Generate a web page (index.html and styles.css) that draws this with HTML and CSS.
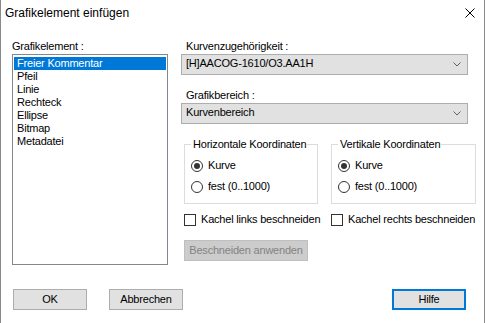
FILE: index.html
```html
<!DOCTYPE html>
<html lang="de">
<head>
    <meta charset="UTF-8">
    <meta name="viewport" content="width=device-width, initial-scale=1.0">
    <title>Grafikelement einfügen</title>
    <link rel="stylesheet" href="styles.css">
</head>
<body>

    <div class="dialog">
        <div class="titlebar">
            <span class="title">Grafikelement einfügen</span>
            <svg class="close" width="10" height="10" viewBox="0 0 10 10">
                <path d="M0.5 0.5L9.5 9.5M9.5 0.5L0.5 9.5" stroke="#000" stroke-width="1" fill="none"/>
            </svg>
        </div>

        <div class="main">
            <div class="left">
                <div class="label">Grafikelement :</div>
                <ul class="listbox">
                    <li class="selected">Freier Kommentar</li>
                    <li>Pfeil</li>
                    <li>Linie</li>
                    <li>Rechteck</li>
                    <li>Ellipse</li>
                    <li>Bitmap</li>
                    <li>Metadatei</li>
                </ul>
            </div>

            <div class="right">
                <div class="label indent">Kurvenzugehörigkeit :</div>
                <div class="combo">
                    <span>[H]AACOG-1610/O3.AA1H</span>
                    <svg width="8" height="5" viewBox="0 0 8 5"><polyline points="0.5,0.5 4,4 7.5,0.5" stroke="#606060" fill="none"/></svg>
                </div>

                <div class="label indent">Grafikbereich :</div>
                <div class="combo">
                    <span>Kurvenbereich</span>
                    <svg width="8" height="5" viewBox="0 0 8 5"><polyline points="0.5,0.5 4,4 7.5,0.5" stroke="#606060" fill="none"/></svg>
                </div>

                <div class="options">
                    <div class="groups">
                        <fieldset class="group group-h">
                            <legend>Horizontale Koordinaten</legend>
                            <div class="radio"><span class="dot checked"></span>Kurve</div>
                            <div class="radio"><span class="dot"></span>fest (0..1000)</div>
                        </fieldset>
                        <fieldset class="group group-v">
                            <legend>Vertikale Koordinaten</legend>
                            <div class="radio"><span class="dot checked"></span>Kurve</div>
                            <div class="radio"><span class="dot"></span>fest (0..1000)</div>
                        </fieldset>
                    </div>

                    <div class="checks">
                        <div class="check"><span class="box"></span>Kachel links beschneiden</div>
                        <div class="check"><span class="box"></span>Kachel rechts beschneiden</div>
                    </div>

                    <button class="btn btn-apply" disabled>Beschneiden anwenden</button>
                </div>
            </div>
        </div>

        <div class="footer">
            <button class="btn">OK</button>
            <button class="btn btn-cancel">Abbrechen</button>
            <button class="btn btn-default">Hilfe</button>
        </div>
    </div>

</body>
</html>
```

FILE: styles.css
```css
* {
    margin: 0;
    padding: 0;
    box-sizing: border-box;
}

body {
    width: 485px;
    height: 323px;
    overflow: hidden;
    background: #fff;
    font-family: 'Liberation Sans', Arial, sans-serif;
    font-size: 11px;
    line-height: 13px;
    letter-spacing: -0.2px;
    color: #000;
}

.dialog {
    width: 485px;
    height: 323px;
    background: #fff;
    border-left: 1px solid #8a8a8a;
    border-right: 1px solid #8a8a8a;
}

/* title bar */
.titlebar {
    height: 31px;
    display: flex;
    justify-content: space-between;
    align-items: flex-start;
}

.title {
    font-size: 12px;
    line-height: 15px;
    letter-spacing: 0;
    padding: 6px 0 0 4px;
}

.close {
    margin: 8px 9px 0 0;
}

/* content */
.main {
    display: flex;
    padding: 9px 0 0 11px;
}

.left {
    width: 156px;
}

.label {
    height: 13px;
    margin-bottom: 1px;
}

.label.indent {
    padding-left: 5px;
}

.listbox {
    list-style: none;
    height: 211px;
    border: 1px solid #828790;
    padding: 2px 1px;
}

.listbox li {
    height: 13px;
    padding-left: 3px;
}

.listbox li.selected {
    background: #0078d7;
    color: #fff;
}

.right {
    width: 296px;
    margin-left: 13px;
}

.combo {
    width: 287px;
    height: 21px;
    background: #e1e1e1;
    border: 1px solid #adadad;
    padding: 2px 6px 4px 4px;
    display: flex;
    justify-content: space-between;
    align-items: center;
    margin-bottom: 14px;
}

.combo svg {
    margin-top: 2px;
}

.options {
    margin: 4px 0 0 3px;
}

.groups {
    display: flex;
    gap: 13px;
}

.group {
    border: 1px solid #dcdcdc;
    padding: 0 0 10px 6px;
    min-width: 0;
}

.group-h {
    width: 134px;
}

.group-v {
    width: 145px;
}

.group legend {
    padding: 0 1px 0 2px;
    line-height: 13px;
}

.radio {
    display: flex;
    align-items: center;
    height: 13px;
    margin-top: 8px;
}

.dot {
    width: 12px;
    height: 12px;
    border: 1px solid #333;
    border-radius: 50%;
    margin-right: 5px;
    display: flex;
    align-items: center;
    justify-content: center;
}

.dot.checked::after {
    content: "";
    width: 6px;
    height: 6px;
    border-radius: 50%;
    background: #333;
}

.checks {
    display: grid;
    grid-template-columns: 147px auto;
    margin-top: 9px;
}

.check {
    display: flex;
    align-items: center;
    height: 13px;
    white-space: nowrap;
}

.box {
    width: 12px;
    height: 12px;
    border: 1px solid #333;
    background: #fff;
    margin-right: 5px;
}

.btn {
    font: inherit;
    letter-spacing: inherit;
    color: #000;
    width: 74px;
    height: 21px;
    line-height: 19px;
    background: #e1e1e1;
    border: 1px solid #adadad;
    text-align: center;
}

.btn-apply {
    width: 124px;
    margin-top: 14px;
    background: #cccccc;
    border-color: #bfbfbf;
    color: #838383;
}

.footer {
    display: flex;
    padding: 24px 18px 0 12px;
}

.btn-cancel {
    margin-left: 22px;
}

.btn-default {
    margin-left: auto;
    border: 2px solid #0078d7;
    line-height: 17px;
}
```
